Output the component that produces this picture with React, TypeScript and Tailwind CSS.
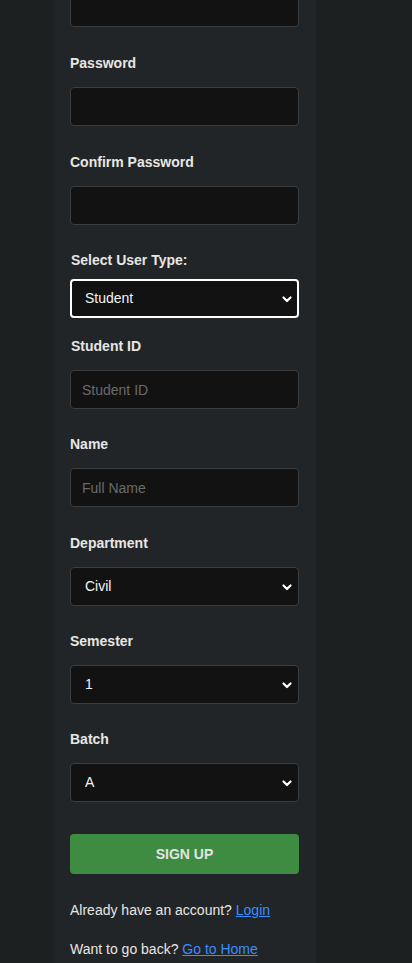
import React from "react";

const Chevron = () => (
  <svg
    className="pointer-events-none absolute right-[6px] top-1/2 -translate-y-1/2"
    width="12"
    height="12"
    viewBox="0 0 12 12"
    fill="none"
  >
    <path d="M2.5 4.5 L6 8 L9.5 4.5" stroke="#ffffff" strokeWidth="2.2" strokeLinecap="round" strokeLinejoin="round" />
  </svg>
);

const Label = ({ children, className }: { children: React.ReactNode; className: string }) => (
  <label className={"block h-5 text-[14px] font-bold leading-5 text-[#e8e6e3] " + className}>{children}</label>
);

const Input = ({ placeholder, type = "text" }: { placeholder?: string; type?: string }) => (
  <input
    type={type}
    placeholder={placeholder}
    className="block h-[39px] w-full rounded-[4px] border border-[#3b3d3f] bg-[#121212] px-[11px] text-[14px] text-[#e8e6e3] outline-none placeholder:text-[#6a6a6a]"
  />
);

const Select = ({ value, options, focused = false }: { value: string; options: string[]; focused?: boolean }) => (
  <div className="relative">
    <select
      defaultValue={value}
      className={
        "block h-[39px] w-full appearance-none rounded-[4px] bg-[#121212] text-[14px] text-[#f2f2f2] outline-none " +
        (focused ? "border-2 border-white pl-[13px]" : "border border-[#3b3d3f] pl-[14px]")
      }
    >
      {options.map((o) => (
        <option key={o}>{o}</option>
      ))}
    </select>
    <Chevron />
  </div>
);

export default function App() {
  return (
    <div
      className="h-[963px] overflow-hidden bg-[#1d2021]"
      style={{ fontFamily: '"Liberation Sans", Arial, sans-serif' }}
    >
      <div className="ml-[53px] w-[263px] bg-[#212527] px-[17px] pb-[40px]">
        <div className="-mt-[12px]">
          <Input type="text" />
        </div>

        <Label className="mt-[26px] mb-[14px]">Password</Label>
        <Input type="password" />

        <Label className="mt-[26px] mb-[14px]">Confirm Password</Label>
        <Input type="password" />

        <Label className="mt-[25px] mb-[9px] pl-px">Select User Type:</Label>
        <Select value="Student" options={["Student", "Teacher", "Admin"]} focused />

        <Label className="mt-[18px] mb-[14px] pl-px">Student ID</Label>
        <Input placeholder="Student ID" />

        <Label className="mt-[25px] mb-[14px]">Name</Label>
        <Input placeholder="Full Name" />

        <Label className="mt-[26px] mb-[14px]">Department</Label>
        <Select value="Civil" options={["Civil", "Computer", "Electrical", "Mechanical"]} />

        <Label className="mt-[25px] mb-[14px]">Semester</Label>
        <Select value="1" options={["1", "2", "3", "4", "5", "6", "7", "8"]} />

        <Label className="mt-[25px] mb-[14px]">Batch</Label>
        <Select value="A" options={["A", "B", "C"]} />

        <button className="mt-[32px] block h-[40px] w-full rounded-[4px] bg-[#3d8c41] text-[14px] font-bold text-[#e3e3e3]">
          SIGN UP
        </button>

        <p className="mt-[26px] h-5 text-[14px] leading-5 text-[#e8e6e3]">
          Already have an account?{" "}
          <a href="#" className="text-[#3b8eff] underline">
            Login
          </a>
        </p>
        <p className="mt-[19px] h-5 text-[14px] leading-5 text-[#e8e6e3]">
          Want to go back?{" "}
          <a href="#" className="text-[#3b8eff] underline">
            Go to Home
          </a>
        </p>
      </div>
    </div>
  );
}
